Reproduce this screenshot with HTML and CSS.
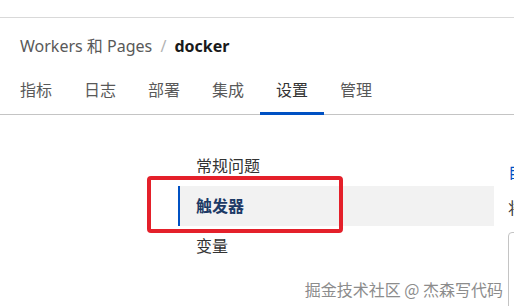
FILE: index.html
```html
<!DOCTYPE html>
<html lang="zh-CN">
    <head>
        <meta charset="UTF-8" />
        <meta name="viewport" content="width=device-width, initial-scale=1.0" />
        <title>Workers 和 Pages - docker</title>
        <link rel="stylesheet" href="styles.css">
    </head>
    <body>
        <!--Header-->
        <div class="topbar"></div>
        <div class="breadcrumb">
            <span class="crumb">Workers 和 Pages</span>
            <span class="sep">/</span>
            <span class="current">docker</span>
        </div>
        <nav class="tabs">
            <a class="tab">指标</a>
            <a class="tab">日志</a>
            <a class="tab">部署</a>
            <a class="tab">集成</a>
            <a class="tab active">设置</a>
            <a class="tab">管理</a>
        </nav>

        <!--Settings-->
        <main class="settings">
            <ul class="side-menu">
                <li class="menu-item">常规问题</li>
                <li class="menu-item active">触发器</li>
                <li class="menu-item">变量</li>
            </ul>
            <section class="panel">
                <div class="panel-link">自定义域</div>
                <div class="panel-title">将</div>
                <div class="panel-box"></div>
            </section>
            <!--Annotation-->
            <div class="highlight"></div>
        </main>

        <div class="watermark">掘金技术社区 @ 杰森写代码</div>
    </body>
</html>
```

FILE: styles.css
```css
/* Page */
:root {
    --line: #d9d9d9;
    --text: #333;
    --muted: #595959;
    --blue: #0051c3;
}
body {
    margin: 0;
    width: 514px;
    height: 306px;
    overflow: hidden;
    position: relative;
    background: #fff;
    color: var(--text);
    font-family: "Noto Sans", "Noto Sans CJK SC", sans-serif;
}
.topbar {
    height: 17px;
    border-bottom: 1px solid var(--line);
}
.breadcrumb {
    margin: 16px 0 0 20px;
    font-size: 16px;
    line-height: 24px;
    white-space: nowrap;
}
.crumb {
    color: var(--muted);
}
.sep {
    color: #b3b3b3;
    margin: 0 4px;
}
.current {
    color: #1a1a1a;
    font-size: 16px;
    font-weight: 700;
}
/* Tabs */
.tabs {
    display: flex;
    margin-top: 8px;
    padding-left: 4px;
    border-bottom: 1px solid #c4c4c4;
}
.tab {
    padding: 12px 16px 10px;
    font-size: 16px;
    line-height: 24px;
    color: var(--muted);
    border-bottom: 3px solid transparent;
    margin-bottom: -1px;
}
.tab.active {
    color: var(--text);
    border-bottom-color: var(--blue);
}
/* Settings */
.settings {
    display: flex;
    gap: 14px;
    padding: 31px 0 0 178px;
    position: relative;
}
.side-menu {
    list-style: none;
    margin: 0;
    padding: 0;
    width: 316px;
    flex: none;
}
.menu-item {
    height: 40px;
    line-height: 40px;
    padding-left: 18px;
    font-size: 16px;
    color: var(--text);
}
.menu-item.active {
    padding-left: 16px;
    border-left: 2px solid var(--blue);
    background: #f2f2f2;
    color: #1d3a66;
    font-weight: 700;
}
.panel {
    flex: none;
    width: 200px;
    font-size: 16px;
}
.panel-link {
    margin-top: 14px;
    color: var(--blue);
    line-height: 24px;
}
.panel-title {
    margin-top: 12px;
    line-height: 24px;
    color: var(--text);
}
.panel-box {
    margin-top: 12px;
    height: 80px;
    border: 1px solid #c4c4c4;
    border-radius: 4px;
}
.highlight {
    position: absolute;
    left: 147px;
    top: 61px;
    width: 188px;
    height: 49px;
    border: 4px solid #e4202a;
    border-radius: 4px;
}
.watermark {
    position: absolute;
    right: 11px;
    bottom: 7px;
    font-size: 16px;
    line-height: 20px;
    color: #8c8c8c;
    font-family: "Noto Sans CJK SC", sans-serif;
    text-shadow: 0 0 2px #fff;
}
```
